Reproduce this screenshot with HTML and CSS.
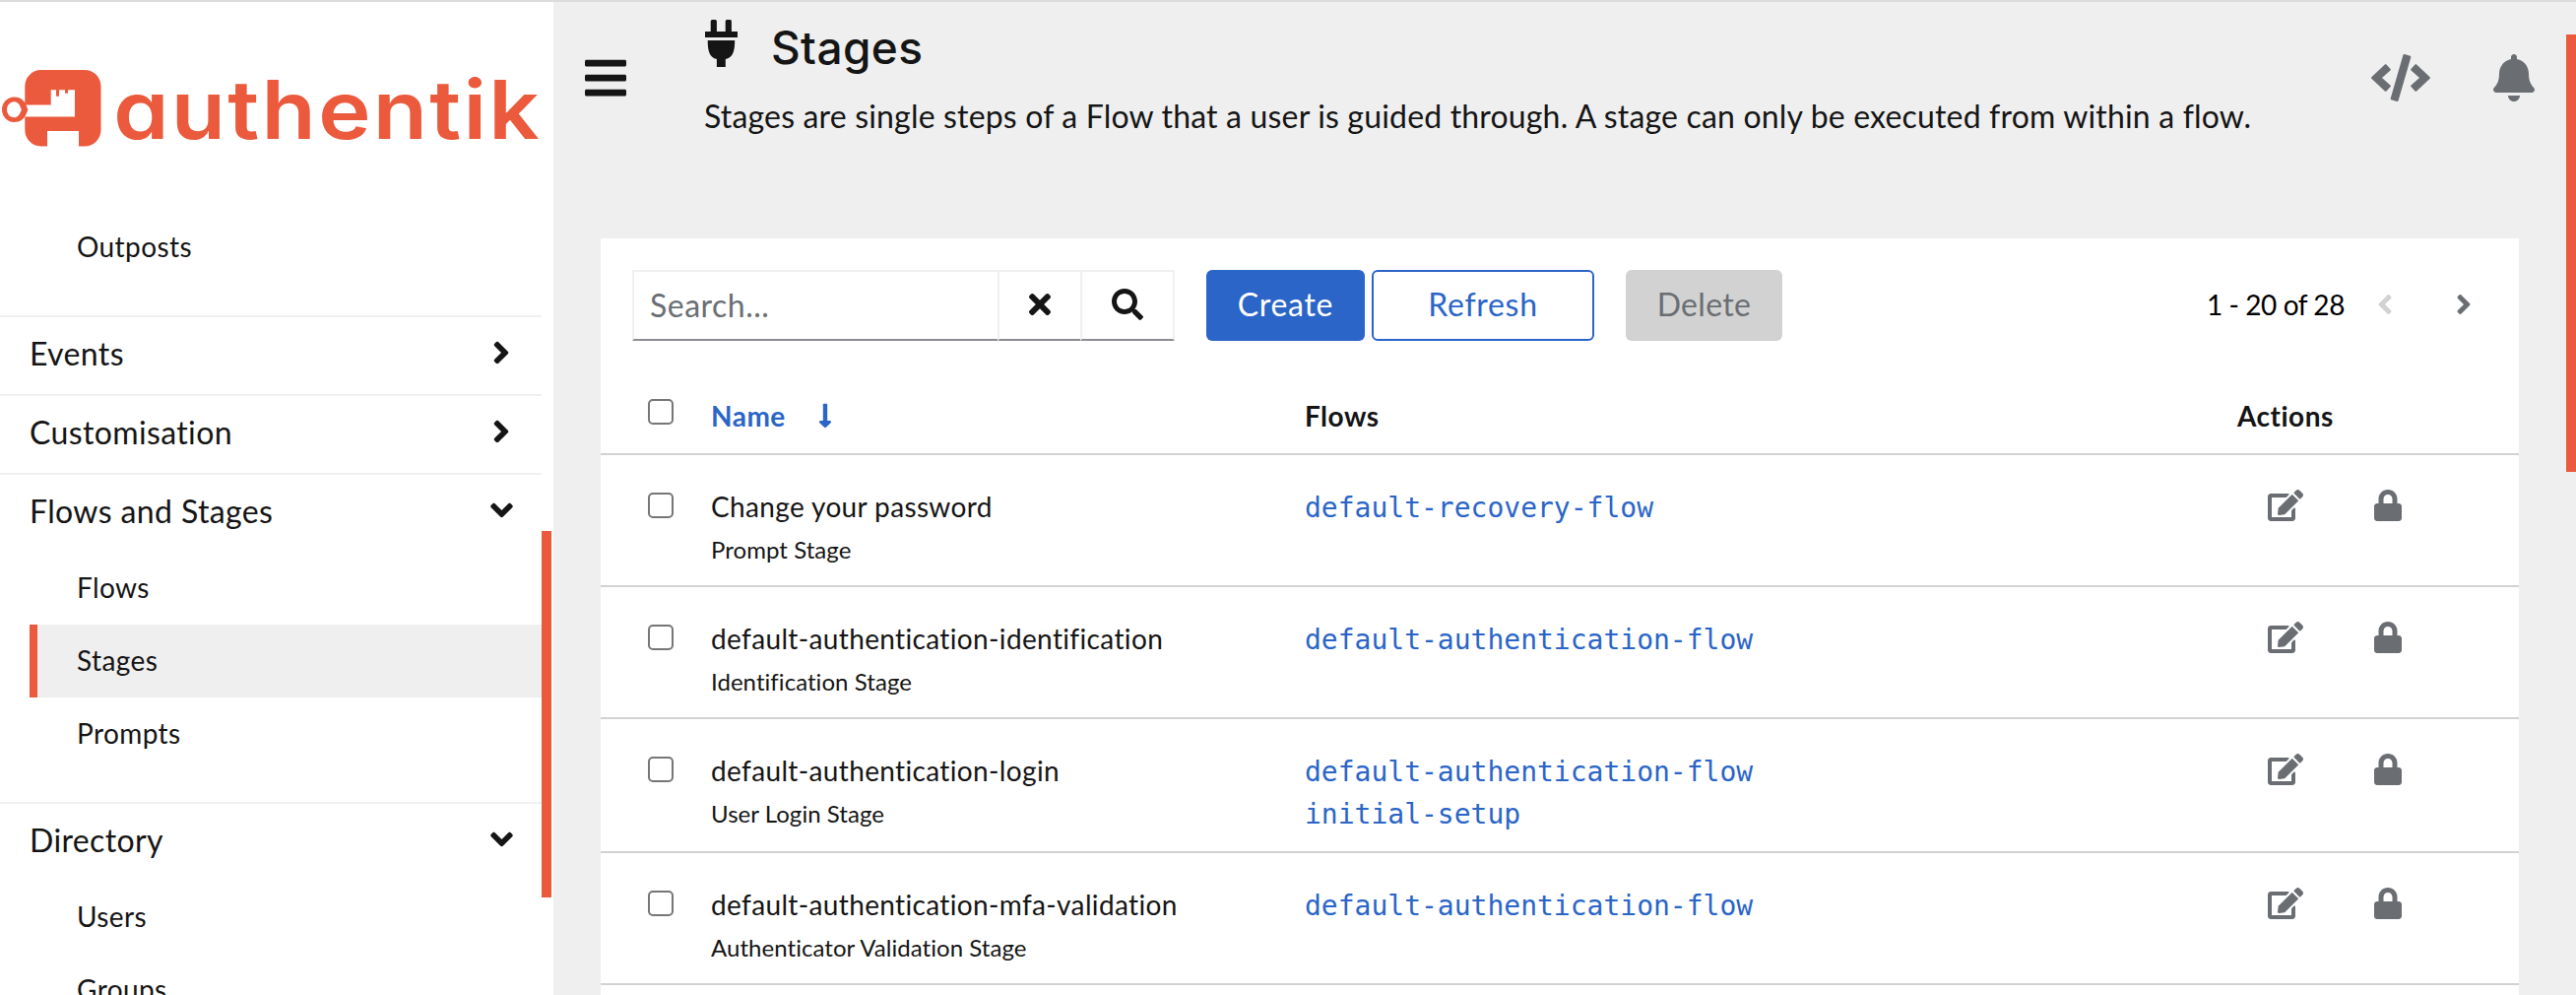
FILE: index.html
```html
<!DOCTYPE html>
<html lang="en">
<head>
<meta charset="utf-8">
<title>Stages - authentik</title>
<link rel="stylesheet" href="styles.css">
</head>
<body>
<svg class="sprite" aria-hidden="true">
  <symbol id="angle-right" viewBox="0 0 256 512"><path d="M224.3 273l-136 136c-9.4 9.4-24.6 9.4-33.9 0l-22.6-22.6c-9.4-9.4-9.4-24.6 0-33.9l96.4-96.4-96.4-96.4c-9.4-9.4-9.4-24.6 0-33.9L54.3 103c9.4-9.4 24.6-9.4 33.9 0l136 136c9.5 9.4 9.5 24.6.1 34z"/></symbol>
  <symbol id="angle-left" viewBox="0 0 256 512"><path d="M31.7 239l136-136c9.4-9.4 24.6-9.4 33.9 0l22.6 22.6c9.4 9.4 9.4 24.6 0 33.9L127.9 256l96.4 96.4c9.4 9.4 9.4 24.6 0 33.9L201.7 409c-9.4 9.4-24.6 9.4-33.9 0l-136-136c-9.5-9.4-9.5-24.6-.1-34z"/></symbol>
  <symbol id="angle-down" viewBox="0 0 320 512"><path d="M143 352.3L7 216.3c-9.4-9.4-9.4-24.6 0-33.9l22.6-22.6c9.4-9.4 24.6-9.4 33.9 0l96.4 96.4 96.4-96.4c9.4-9.4 24.6-9.4 33.9 0l22.6 22.6c9.4 9.4 9.4 24.6 0 33.9l-136 136c-9.2 9.4-24.4 9.4-33.8 0z"/></symbol>
  <symbol id="edit" viewBox="0 0 576 512"><path d="M402.6 83.2l90.2 90.2c3.8 3.8 3.8 10 0 13.8L274.4 405.6l-92.8 10.3c-12.4 1.4-22.9-9.1-21.5-21.5l10.3-92.8L388.8 83.2c3.8-3.8 10-3.8 13.8 0zm162-22.9l-48.8-48.8c-15.2-15.2-39.9-15.2-55.2 0l-35.4 35.4c-3.8 3.8-3.8 10 0 13.8l90.2 90.2c3.8 3.8 10 3.8 13.8 0l35.4-35.4c15.2-15.3 15.2-40 0-55.2zM384 346.2V448H64V128h229.8c3.2 0 6.2-1.3 8.5-3.5l40-40c7.6-7.6 2.2-20.5-8.5-20.5H48C21.5 64 0 85.5 0 112v352c0 26.5 21.5 48 48 48h352c26.5 0 48-21.5 48-48V306.2c0-10.7-12.9-16-20.5-8.5l-40 40c-2.2 2.3-3.5 5.3-3.5 8.5z"/></symbol>
  <symbol id="lock" viewBox="0 0 448 512"><path d="M400 224h-24v-72C376 68.2 307.8 0 224 0S72 68.2 72 152v72H48c-26.5 0-48 21.5-48 48v192c0 26.5 21.5 48 48 48h352c26.5 0 48-21.5 48-48V272c0-26.5-21.5-48-48-48zm-104 0H152v-72c0-39.7 32.3-72 72-72s72 32.3 72 72v72z"/></symbol>
</svg>
<div class="page">
  <aside class="sidebar">
    <svg class="logo" viewBox="0 0 550 110" width="550" height="110" role="img" aria-label="authentik">
      <path fill-rule="evenodd" d="M41.5 21H86a16.5 16.5 0 0 1 16.5 16.5V82A16.5 16.5 0 0 1 86 98.500H80V83H48v15.500h-6.500A16.500 16.500 0 0 1 25.300 82V68.500H76V41.300H69v3.400h-3v-3.400h-6v6.400h-3v-6.400h-5.300v15.200H25.300V37.500A16.500 16.500 0 0 1 41.500 21z"/>
      <path fill-rule="evenodd" d="M14.200 48.500c6.500 0 10.300 3.500 12.300 8l1.900 4.800-1.900 4.700c-2 4.500-5.800 8-12.300 8C7.400 74 2 68.300 2 61.300s5.400-12.800 12.200-12.800zm0 4.700c-4 0-7.200 3.700-7.200 8.100s3.200 8 7.200 8c3.400 0 5.600-2 7.600-8-2-6.100-4.200-8.100-7.600-8.100z"/>
      <text class="wordmark" transform="scale(1.1 1)" x="104.700" y="91.300">authentik</text>
    </svg>
    <nav class="nav">
      <ul class="nav-items first">
        <li class="nav-item">Outposts</li>
      </ul>
      <div class="nav-head"><span>Events</span><svg class="chev"><use href="#angle-right"/></svg></div>
      <div class="nav-head"><span>Customisation</span><svg class="chev"><use href="#angle-right"/></svg></div>
      <div class="nav-head"><span>Flows and Stages</span><svg class="chev wide"><use href="#angle-down"/></svg></div>
      <ul class="nav-items">
        <li class="nav-item">Flows</li>
        <li class="nav-item current">Stages</li>
        <li class="nav-item">Prompts</li>
      </ul>
      <div class="nav-head"><span>Directory</span><svg class="chev wide"><use href="#angle-down"/></svg></div>
      <ul class="nav-items">
        <li class="nav-item">Users</li>
        <li class="nav-item">Groups</li>
      </ul>
    </nav>
    <div class="thumb thumb-nav"></div>
  </aside>
  <main class="main">
    <header class="header">
      <svg class="burger" viewBox="0 0 448 512"><path d="M16 132h416c8.837 0 16-7.163 16-16V76c0-8.837-7.163-16-16-16H16C7.163 60 0 67.163 0 76v40c0 8.837 7.163 16 16 16zm0 160h416c8.837 0 16-7.163 16-16v-40c0-8.837-7.163-16-16-16H16c-8.837 0-16 7.163-16 16v40c0 8.837 7.163 16 16 16zm0 160h416c8.837 0 16-7.163 16-16v-40c0-8.837-7.163-16-16-16H16c-8.837 0-16 7.163-16 16v40c0 8.837 7.163 16 16 16z"/></svg>
      <div class="heading">
        <h1 class="title">
          <svg class="plug" viewBox="0 0 33 48"><path d="M5.700 12V1.500Q5.700 0 7.200 0h3.200q1.500 0 1.500 1.500V12h8.800V1.500q0-1.500 1.500-1.500h3.200q1.500 0 1.500 1.500V12H33v6H0v-6zM2.700 21h27.500c0 10-1.500 17.500-9.400 19v8h-8.900v-8C4.200 38.500 2.700 31 2.700 21z"/></svg>
          <span>Stages</span>
        </h1>
        <p class="desc">Stages are single steps of a Flow that a user is guided through. A stage can only be executed from within a flow.</p>
      </div>
      <div class="tools">
        <svg width="60" height="48" viewBox="0 0 640 512"><path d="M278.900 511.500l-61-17.700c-6.400-1.800-10-8.500-8.200-14.900L346.200 8.700c1.800-6.400 8.500-10 14.900-8.200l61 17.700c6.400 1.800 10 8.500 8.200 14.900L293.800 503.300c-1.900 6.400-8.500 10.100-14.900 8.200zm-114-112.200l43.500-46.400c4.600-4.900 4.300-12.700-.8-17.200L117 256l90.600-79.700c5.100-4.500 5.500-12.300.8-17.200l-43.500-46.400c-4.500-4.800-12.100-5.100-17-.5L3.800 247.200c-5.100 4.700-5.100 12.800 0 17.500l144.100 135.100c4.900 4.600 12.500 4.400 17-.5zm327.200.6l144.100-135.100c5.100-4.700 5.100-12.800 0-17.500L492.100 112.100c-4.800-4.500-12.400-4.300-17 .5L431.600 159c-4.600 4.900-4.300 12.700.8 17.200L523 256l-90.600 79.700c-5.100 4.500-5.500 12.300-.8 17.200l43.500 46.400c4.500 4.900 12.100 5.100 17 .6z"/></svg>
        <svg width="42" height="48" viewBox="0 0 448 512"><path d="M224 512c35.320 0 63.970-28.650 63.970-64H160.030c0 35.350 28.650 64 63.970 64zm215.390-149.710c-19.320-20.760-55.470-51.990-55.470-154.290 0-77.700-54.480-139.900-127.940-155.160V32c0-17.670-14.320-32-31.980-32s-31.980 14.330-31.980 32v20.840C118.560 68.100 64.080 130.300 64.080 208c0 102.300-36.150 133.530-55.470 154.290-6 6.450-8.660 14.160-8.610 21.710.11 16.400 12.980 32 32.100 32h383.800c19.120 0 32-15.600 32.100-32 .05-7.550-2.610-15.270-8.610-21.710z"/></svg>
      </div>
    </header>
    <section class="card">
      <div class="toolbar">
        <div class="search">
          <div class="field">Search...</div>
          <div class="field-btn clear"><svg width="22" height="32" viewBox="0 0 352 512"><path d="M242.720 256l100.070-100.070c12.280-12.280 12.280-32.190 0-44.480l-22.240-22.240c-12.280-12.280-32.190-12.280-44.480 0L176 189.280 75.930 89.210c-12.280-12.280-32.190-12.280-44.480 0L9.210 111.450c-12.280 12.280-12.280 32.190 0 44.480L109.280 256 9.210 356.070c-12.280 12.280-12.280 32.190 0 44.480l22.240 22.240c12.280 12.280 32.200 12.280 44.480 0L176 322.720l100.070 100.070c12.280 12.280 32.200 12.280 44.480 0l22.240-22.240c12.280-12.280 12.280-32.190 0-44.480L242.720 256z"/></svg></div>
          <div class="field-btn go"><svg width="32" height="32" viewBox="0 0 512 512"><path d="M505 442.700L405.300 343c-4.500-4.500-10.600-7-17-7H372c27.600-35.300 44-79.700 44-128C416 93.100 322.900 0 208 0S0 93.100 0 208s93.100 208 208 208c48.300 0 92.700-16.400 128-44v16.300c0 6.400 2.500 12.500 7 17l99.700 99.700c9.400 9.400 24.600 9.400 33.900 0l28.300-28.300c9.400-9.400 9.400-24.600.1-34zM208 336c-70.700 0-128-57.200-128-128 0-70.700 57.200-128 128-128 70.700 0 128 57.200 128 128 0 70.700-57.200 128-128 128z"/></svg></div>
        </div>
        <div class="group">
          <div class="btn primary">Create</div>
          <div class="btn secondary">Refresh</div>
        </div>
        <div class="btn disabled">Delete</div>
        <div class="pager">
          <span>1 - 20 of 28</span>
          <svg class="page-arrow off"><use href="#angle-left"/></svg>
          <svg class="page-arrow"><use href="#angle-right"/></svg>
        </div>
      </div>
      <div class="row head">
        <div class="check"></div>
        <div class="sorted"><span>Name</span><svg width="14" height="28" viewBox="0 0 256 512"><path d="M168 345.941V44c0-6.627-5.373-12-12-12h-56c-6.627 0-12 5.373-12 12v301.941H41.941c-21.382 0-32.090 25.851-16.971 40.971l86.059 86.059c9.373 9.373 24.569 9.373 33.941 0l86.059-86.059c15.119-15.119 4.411-40.971-16.971-40.971H168z"/></svg></div>
        <div>Flows</div>
        <div class="actions-head">Actions</div>
      </div>
      <div class="row">
        <div class="check"></div>
        <div class="name">Change your password<small>Prompt Stage</small></div>
        <div class="flows"><a>default-recovery-flow</a></div>
        <div class="actions"><svg class="edit"><use href="#edit"/></svg><svg class="lock"><use href="#lock"/></svg></div>
      </div>
      <div class="row">
        <div class="check"></div>
        <div class="name">default-authentication-identification<small>Identification Stage</small></div>
        <div class="flows"><a>default-authentication-flow</a></div>
        <div class="actions"><svg class="edit"><use href="#edit"/></svg><svg class="lock"><use href="#lock"/></svg></div>
      </div>
      <div class="row">
        <div class="check"></div>
        <div class="name">default-authentication-login<small>User Login Stage</small></div>
        <div class="flows"><a>default-authentication-flow</a><a>initial-setup</a></div>
        <div class="actions"><svg class="edit"><use href="#edit"/></svg><svg class="lock"><use href="#lock"/></svg></div>
      </div>
      <div class="row">
        <div class="check"></div>
        <div class="name">default-authentication-mfa-validation<small>Authenticator Validation Stage</small></div>
        <div class="flows"><a>default-authentication-flow</a></div>
        <div class="actions"><svg class="edit"><use href="#edit"/></svg><svg class="lock"><use href="#lock"/></svg></div>
      </div>
    </section>
    <div class="thumb thumb-main"></div>
  </main>
</div>
</body>
</html>
```
FILE: styles.css
```css
:root {
  --accent: #eb5a3c;
  --blue: #2a65c7;
  --text: #151515;
  --grey: #6a6e73;
  --line: #d2d2d2;
  --bg: #efefef;
}
* { box-sizing: border-box; margin: 0; padding: 0; }
body {
  height: 1010px;
  overflow: hidden;
  font-family: Lato, "Open Sans", sans-serif;
  font-variant-ligatures: none;
  color: var(--text);
  background: var(--bg);
}
svg { display: block; fill: currentColor; flex: none; }
.sprite { display: none; }
.page {
  display: flex;
  height: 1010px;
  border-top: 2px solid #dcdcdc;
  overflow: hidden;
}

/* Sidebar */
.sidebar { position: relative; width: 562px; flex: none; background: #fff; }
.logo { margin-top: 48px; color: var(--accent); }
.wordmark {
  font: 600 82px Inter, sans-serif;
  font-feature-settings: "cv11";
  letter-spacing: 2.1px;
}
.nav { width: 550px; }
.nav-items { list-style: none; padding: 0 0 32px 30px; }
.nav-items.first { padding-top: 54px; }
.nav-item {
  height: 74px;
  line-height: 73px;
  padding-left: 48px;
  font-size: 28px;
  letter-spacing: .4px;
}
.nav-item.current {
  padding-left: 40px;
  border-left: 8px solid var(--accent);
  background: var(--bg);
}
.nav-head {
  display: flex;
  justify-content: space-between;
  align-items: center;
  height: 80px;
  padding: 0 30px 5px 30px;
  border-top: 2px solid #f0f0f0;
  font-size: 32px;
  letter-spacing: .37px;
}
.chev { width: 18px; height: 36px; margin: -1px 2px 0 0; }
.chev.wide { width: 23px; margin-right: -1px; }
.thumb { position: absolute; background: var(--accent); }
.thumb-nav { left: 550px; top: 537px; width: 10px; height: 372px; }
.thumb-main { right: 0; top: 33px; width: 10px; height: 444px; }

/* Page header */
.main { position: relative; flex: 1; }
.header { display: flex; height: 240px; padding: 0 42px 0 32px; }
.burger { width: 42px; height: 48px; margin-top: 53px; }
.heading { margin-left: 79px; padding-top: 10px; }
.title {
  display: flex;
  gap: 34px;
  font: 500 46px/72px Inter, sans-serif;
  letter-spacing: .4px;
}
.plug { width: 33px; height: 48px; margin: 8px 0 0 1px; }
.desc {
  margin-top: 10px;
  font-size: 32px;
  line-height: 48px;
  letter-spacing: .17px;
  white-space: nowrap;
}
.tools { display: flex; gap: 64px; margin: 53px 0 0 auto; color: var(--grey); }

/* Card */
.card { margin: 0 58px 0 48px; height: 768px; background: #fff; }
.toolbar { display: flex; align-items: center; padding: 32px 48px 38px 32px; gap: 32px; }
.search { display: flex; width: 551px; height: 72px; }
.field, .field-btn {
  border: 2px solid #f0f0f0;
  border-right: 0;
  border-bottom-color: #8a8d90;
}
.field {
  width: 371px;
  padding-left: 16px;
  font-size: 32px;
  line-height: 68px;
  letter-spacing: .5px;
  color: var(--grey);
}
.field-btn { display: flex; align-items: center; justify-content: center; padding-bottom: 2px; }
.clear { width: 84px; }
.go { width: 96px; border-right: 2px solid #f0f0f0; }
.group { display: flex; gap: 7px; }
.btn {
  height: 72px;
  border-radius: 6px;
  font-size: 32px;
  line-height: 69px;
  text-align: center;
  letter-spacing: .7px;
}
.primary { width: 161px; background: var(--blue); color: #fff; }
.secondary { width: 226px; border: 2px solid var(--blue); color: var(--blue); line-height: 65px; }
.disabled { width: 159px; background: var(--line); color: var(--grey); letter-spacing: .35px; }
.pager { display: flex; align-items: center; margin-left: auto; height: 72px; padding-bottom: 2px; color: #000; font-size: 28px; letter-spacing: -.43px; }
.page-arrow { width: 16px; height: 32px; margin-left: 64px; color: var(--grey); }
.page-arrow.off { margin-left: 33px; color: var(--line); }

.row {
  display: grid;
  grid-template-columns: 64px 603px 945px 1fr;
  min-height: 134px;
  padding-left: 48px;
  border-bottom: 2px solid var(--line);
  font-size: 28px;
}
.row.head { min-height: 78px; line-height: 76px; font-weight: 700; letter-spacing: .5px; }
.check {
  width: 26px;
  height: 26px;
  margin-top: 38px;
  border: 2px solid #767676;
  border-radius: 5px;
}
.head .check { margin-top: 21px; }
.sorted { display: flex; gap: 33px; color: var(--blue); }
.sorted svg { margin-top: 24px; }
.actions-head { padding-left: 2px; }
.name { padding-top: 31px; line-height: 42px; letter-spacing: .36px; }
.name small { display: block; margin-top: 5px; font-size: 24px; line-height: 36px; letter-spacing: .05px; }
.flows { padding: 32px 0 16px; line-height: 43px; font-family: "DejaVu Sans Mono", monospace; color: var(--blue); }
.flows a { display: block; }
.actions { display: flex; gap: 72px; padding: 35px 0 0 33px; color: var(--grey); }
.edit { width: 36px; height: 32px; }
.lock { width: 28px; height: 32px; }
```
